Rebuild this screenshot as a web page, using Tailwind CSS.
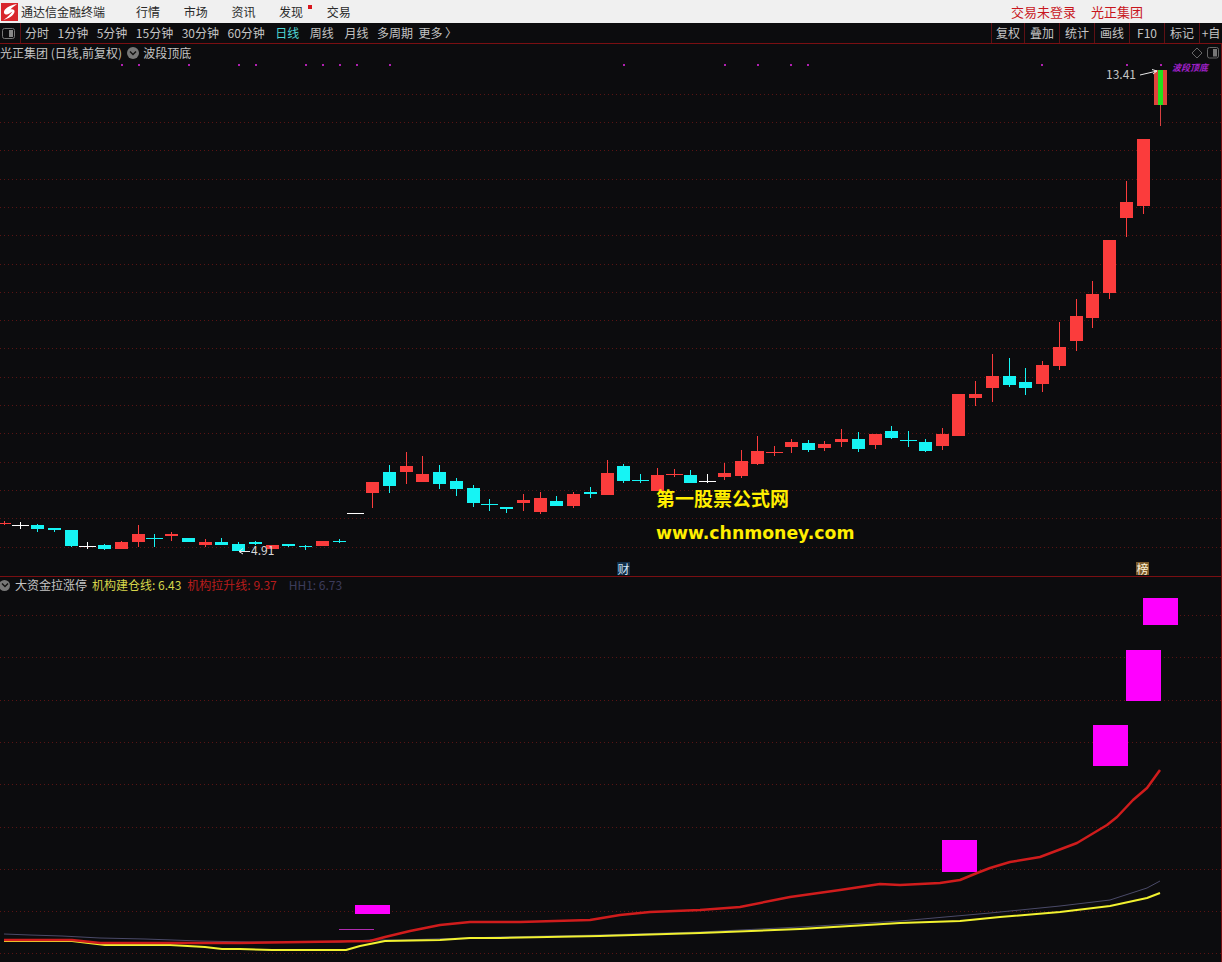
<!DOCTYPE html>
<html lang="zh-CN">
<head>
  <meta charset="UTF-8" />
  <title>通达信金融终端</title>
  <script src="https://cdn.jsdelivr.net/npm/@tailwindcss/browser@4"></script>
</head>
<body class="w-[1222px] h-[962px] overflow-hidden flex flex-col bg-[#0c0c0e] font-['Noto_Sans_CJK_SC',sans-serif] text-xs">

  <!-- Title bar -->
  <header class="h-[23px] shrink-0 bg-[#f0f0f0] flex items-center text-[#2a2a2a]">
    <svg class="ml-px w-[17px] h-[18px] shrink-0" viewBox="0 0 17 18">
      <rect width="17" height="18" fill="#d8262c" />
      <path d="M16 1C11 2 6.500 3.500 4 6.500 2.500 8.500 2.500 11 5 11.500 7 12 9 10 11.500 8.500 9.500 11 7 14 2.500 17 8 15.500 12.500 12.500 13.500 9 14 7 12 6 9.500 6.500 11 4.500 13.500 3 16 1Z" fill="#fff" />
    </svg>
    <span class="ml-[3px] w-[115px]">通达信金融终端</span>
    <nav class="flex items-center gap-[23.7px]">
      <span>行情</span>
      <span>市场</span>
      <span>资讯</span>
      <span class="relative">发现<i class="absolute -right-[9px] top-[1px] w-1 h-1 bg-[#d8161d]"></i></span>
      <span>交易</span>
    </nav>
    <div class="ml-auto mr-[79px] flex gap-[15px] text-[13px] text-[#c8161d]">
      <span>交易未登录</span>
      <span>光正集团</span>
    </div>
  </header>

  <!-- Period toolbar -->
  <div class="h-[21px] shrink-0 flex items-stretch border-b border-[#7a0f12] text-[#c4c4c4]">
    <div class="w-[21px] shrink-0 flex items-center border-r border-[#5e1114]">
      <svg class="ml-[2px] w-[13px] h-[11px]" viewBox="0 0 13 11">
        <rect x=".5" y=".5" width="12" height="10" rx="2" fill="none" stroke="#777" />
        <rect x="7" y="2" width="4" height="7" fill="#888" />
      </svg>
    </div>
    <div class="flex items-center pl-1 gap-[8.5px]">
      <span>分时</span>
      <span>1分钟</span>
      <span>5分钟</span>
      <span>15分钟</span>
      <span>30分钟</span>
      <span>60分钟</span>
      <span class="ml-0.5 text-[#4fd6d6]">日线</span>
      <span class="ml-0.5">周线</span>
      <span class="ml-0.5">月线</span>
      <span>多周期</span>
      <span class="-ml-[3px]">更多 〉</span>
    </div>
    <div class="ml-auto flex items-stretch text-center">
      <span class="w-[33px] leading-5 border-l border-[#5e1114]">复权</span>
      <span class="w-[35px] leading-5 border-l border-[#5e1114]">叠加</span>
      <span class="w-[35px] leading-5 border-l border-[#5e1114]">统计</span>
      <span class="w-[35px] leading-5 border-l border-[#5e1114]">画线</span>
      <span class="w-[35px] leading-5 border-l border-[#5e1114]">F10</span>
      <span class="w-[35px] leading-5 border-l border-[#5e1114]">标记</span>
      <span class="w-[23px] leading-5 border-l border-[#5e1114] whitespace-nowrap overflow-hidden">+自</span>
    </div>
  </div>

  <!-- Candle panel -->
  <section class="relative h-[533px] shrink-0 border-b border-r border-[#7a0f12]">
    <svg id="candles" class="absolute left-0 top-0" width="1221" height="532" viewBox="0 44 1221 532"></svg>

    <div class="absolute left-0 top-0 h-[18px] flex items-center text-[#c4c4c4]">
      <span>光正集团 (日线,前复权)</span>
      <i class="ml-[5px] w-3 h-3 rounded-full bg-[#777] flex items-center justify-center">
        <svg class="w-2 h-2" viewBox="0 0 8 8"><path d="M1 2.500 4 5.500 7 2.500" fill="none" stroke="#111" stroke-width="1.4" /></svg>
      </i>
      <span class="ml-1">波段顶底</span>
    </div>

    <svg class="absolute right-[2px] top-[3px] w-[30px] h-3" viewBox="0 0 30 12">
      <path d="M3 6 8 1 13 6 8 11Z" fill="none" stroke="#666" />
      <rect x="18.500" y=".5" width="11" height="10.500" rx="2" fill="none" stroke="#666" />
      <rect x="24" y="2" width="4" height="7.500" fill="#777" />
    </svg>

    <span class="absolute left-[1106px] top-[22px] text-[#c4c4c4]">13.41</span>
    <span class="absolute left-[1172px] top-[18px] text-[9px] font-bold italic leading-3 text-[#a020c8]">波段顶底</span>
    <span class="absolute left-[251px] top-[498px] text-[#d8d8d8]">4.91</span>

    <!-- Watermark -->
    <div class="absolute left-[656px] top-[440px] text-[19px] leading-7 font-bold text-[#ffee00] whitespace-nowrap">第一股票公式网</div>
    <div class="absolute left-[656px] top-[475px] font-['DejaVu_Sans',sans-serif] text-[17.3px] leading-7 font-bold text-[#ffee00] whitespace-nowrap">www.chnmoney.com</div>

    <span class="absolute left-[617px] top-[518px] w-[13px] h-[13px] bg-[#12304a] text-[#cfe2f2] text-xs leading-[13px] text-center">财</span>
    <span class="absolute left-[1136px] top-[518px] w-[13px] h-[13px] bg-[#7a5a2a] text-[#fff3d8] text-xs leading-[13px] text-center">榜</span>
  </section>

  <!-- Indicator panel -->
  <section class="relative flex-1 border-r border-[#7a0f12]">
    <svg id="indicator" class="absolute left-0 top-0" width="1221" height="385" viewBox="0 577 1221 385">
      <rect x="355" y="905" width="35" height="9" fill="#ff00ff" />
      <rect x="339" y="929" width="35" height="1" fill="#b02ab0" />
      <rect x="942" y="840" width="35" height="32" fill="#ff00ff" />
      <rect x="1093" y="725" width="35" height="41" fill="#ff00ff" />
      <rect x="1126" y="650" width="35" height="51" fill="#ff00ff" />
      <rect x="1143" y="598" width="35" height="27" fill="#ff00ff" />
      <polyline fill="none" stroke="#4a4a68" stroke-width="1" points="4,934 30,935 62,936 100,938 145,939 200,941 250,942 340,942 370,940 400,940 500,937 600,935 700,932 800,927 900,921 990,913 1060,906 1110,900 1147,888 1160,881" />
      <polyline fill="none" stroke="#f2f230" stroke-width="2" stroke-linejoin="round" points="4,941 72,941 97,944 105,945 170,945 205,947 222,949 240,949 272,950 346,950 360,946 385,941 440,940 470,938 500,938 600,936 700,933 800,929 900,923 960,921 1000,917 1060,912 1110,906 1147,898 1160,893" />
      <polyline fill="none" stroke="#d01c1c" stroke-width="2.500" stroke-linejoin="round" points="4,940 72,940 100,943 240,943 370,941 385,937 410,931 440,925 470,922 520,922 590,920 620,915 650,912 700,910 740,907 790,897 840,890 880,884 900,885 940,883 960,880 977,873 990,868 1010,862 1040,857 1077,843 1107,825 1117,817 1133,800 1147,788 1160,770" />
    </svg>

    <div class="absolute left-0 top-0 h-4 flex items-center whitespace-nowrap">
      <i class="-ml-px w-[11px] h-[11px] rounded-full bg-[#777] flex items-center justify-center">
        <svg class="w-2 h-2" viewBox="0 0 8 8"><path d="M1 2.500 4 5.500 7 2.500" fill="none" stroke="#111" stroke-width="1.4" /></svg>
      </i>
      <span class="ml-[5px] text-[#c4c4c4]">大资金拉涨停</span>
      <span class="ml-[5px] text-[#d6d64a]">机构建仓线: 6.43</span>
      <span class="ml-1.5 text-[#b81c1c]">机构拉升线: 9.37</span>
      <span class="ml-3 text-[#3c3c5c]">HH1: 6.73</span>
    </div>
  </section>

  <script>
    const NS = "http://www.w3.org/2000/svg";
    const candles = document.getElementById("candles");
    const indicator = document.getElementById("indicator");

    function add(svg, tag, attrs, atBack) {
      const el = document.createElementNS(NS, tag);
      for (const k in attrs) el.setAttribute(k, attrs[k]);
      svg.insertBefore(el, atBack ? svg.firstChild : null);
      return el;
    }

    function gridLines(svg, from, step, count) {
      for (let i = 0; i < count; i++) {
        const y = Math.round(from + step * i) + 0.5;
        add(svg, "line", { x1: 0, x2: 1221, y1: y, y2: y, stroke: "#5a1414", "stroke-dasharray": "1 3" }, true);
      }
    }

    gridLines(candles, 93.7, 28.3, 17);
    gridLines(indicator, 615, 42.3, 9);

    // [colour, body top, body bottom, wick top, wick bottom]; crosses have top == bottom
    const data = [
      ["r",523,524,521,525],["w",525,525,522,529],["c",525,529,524,532],["c",528,530,528,532],
      ["c",530,546,530,547],["w",546,546,542,549],["c",545,549,544,550],["r",542,549,541,549],
      ["r",534,542,525,547],["c",538,538,534,547],["r",534,536,532,541],["c",538,542,538,542],
      ["r",542,545,539,547],["c",542,545,538,545],["c",544,551,542,551],["c",542,544,541,545],
      ["r",545,549,545,549],["c",544,546,544,547],["c",546,547,545,550],["r",541,546,541,546],
      ["c",541,542,539,543],["w",513,513,513,513],["r",482,493,482,508],["c",472,486,465,493],
      ["r",466,472,452,484],["r",474,482,456,482],["c",472,484,465,489],["c",481,489,478,496],
      ["c",488,503,485,507],["c",504,504,499,511],["c",507,509,507,513],["r",500,503,494,511],
      ["r",498,512,492,514],["c",501,506,496,506],["r",494,506,492,508],["c",492,494,487,498],
      ["r",473,495,460,495],["c",466,481,464,483],["c",480,480,474,483],["r",475,491,468,491],
      ["r",474,474,469,477],["c",475,483,470,483],["w",481,481,474,483],["r",473,477,463,480],
      ["r",461,476,450,478],["r",451,464,436,465],["r",452,452,446,456],["r",442,447,439,453],
      ["c",443,450,440,452],["r",444,448,441,451],["r",439,442,429,447],["c",439,449,432,452],
      ["r",434,445,434,449],["c",431,438,426,439],["c",440,440,431,447],["c",442,451,439,452],
      ["r",434,446,428,450],["r",394,436,394,436],["r",394,398,381,406],["r",376,388,354,402],
      ["c",376,385,358,387],["c",382,388,368,395],["r",365,384,361,392],["r",347,366,322,370],
      ["r",316,341,299,351],["r",294,318,281,328],["r",240,293,240,299],["r",202,218,181,237],
      ["r",139,206,139,214]
    ];
    const colours = { r: "#fb3c3c", c: "#16f4f4", w: "#ffffff" };

    data.forEach((d, i) => {
      const cx = Math.floor(4 + 16.75 * i);
      const [kind, top, bottom, wickTop, wickBottom] = d;
      const fill = colours[kind];
      if (wickBottom > wickTop) {
        add(candles, "rect", { x: cx, y: wickTop, width: 1, height: wickBottom - wickTop, fill: fill });
      }
      if (top === bottom) {
        add(candles, "rect", { x: cx - 8, y: top, width: 17, height: 1, fill: fill });
      } else {
        add(candles, "rect", { x: cx - 6, y: top, width: 13, height: bottom - top, fill: fill });
      }
    });

    // Last candle: green core inside a red body
    add(candles, "rect", { x: 1160, y: 105, width: 1, height: 21, fill: "#d84040" });
    add(candles, "rect", { x: 1154, y: 70, width: 13, height: 35, fill: "#e0443c" });
    add(candles, "rect", { x: 1158, y: 70, width: 5, height: 35, fill: "#22e01c" });

    // Top signal dots
    [121,138,188,238,255,305,322,339,356,389,623,724,757,790,807,1041,1126,1160].forEach(x => {
      add(candles, "rect", { x: x, y: 64, width: 2, height: 2, fill: "#b020b0" });
    });

    // High and low arrows
    add(candles, "path", { d: "M1140 75 1157 71M1152 69.500 1157 71 1153 74", fill: "none", stroke: "#e8e8e8" });
    add(candles, "path", { d: "M250 551.500H239M243 548.500 239 551.500 243 554", fill: "none", stroke: "#e8e8e8" });
  </script>
</body>
</html>
